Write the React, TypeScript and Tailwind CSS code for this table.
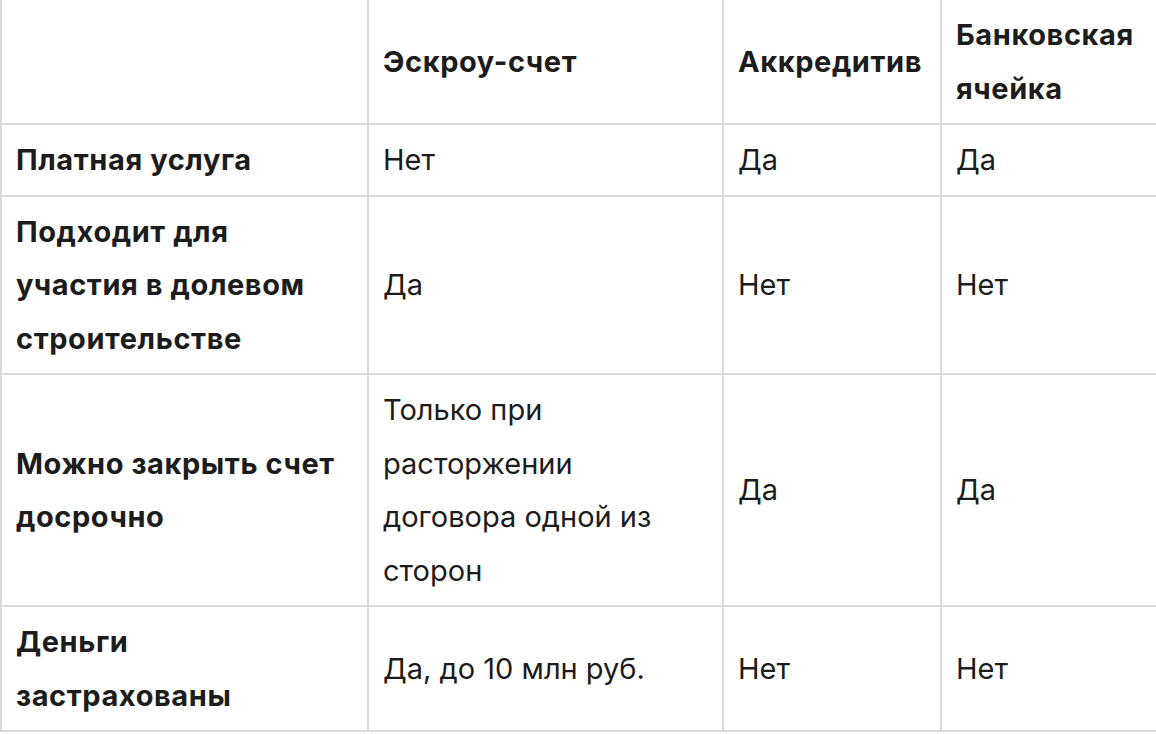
import React from "react";

const rows: { label: string; cells: string[] }[] = [
  { label: "Платная услуга", cells: ["Нет", "Да", "Да"] },
  { label: "Подходит для участия в долевом строительстве", cells: ["Да", "Нет", "Нет"] },
  { label: "Можно закрыть счет досрочно", cells: ["Только при расторжении договора одной из сторон", "Да", "Да"] },
  { label: "Деньги застрахованы", cells: ["Да, до 10 млн руб.", "Нет", "Нет"] },
];

export default function App() {
  return (
    <div className="w-[1156px] h-[734px] bg-white overflow-hidden" style={{ fontFamily: "Inter, 'Noto Sans', sans-serif" }}>
      <table className="table-fixed border-collapse w-[1156px] text-[29px] leading-[53.5px] text-[#1c1c1c]">
        <colgroup>
          <col className="w-[367px]" />
          <col className="w-[355px]" />
          <col className="w-[218px]" />
          <col className="w-[216px]" />
        </colgroup>
        <thead>
          <tr>
            <th className="border-2 border-t-0 border-[#d9d9d9] pl-[14px] pr-6 py-2 text-left align-middle font-bold tracking-[0.02em]"></th>
            <th className="border-2 border-t-0 border-[#d9d9d9] pl-[14px] pr-6 py-2 text-left align-middle font-bold tracking-[0.02em]">Эскроу-счет</th>
            <th className="border-2 border-t-0 border-[#d9d9d9] pl-[14px] pr-2 py-2 text-left align-middle font-bold tracking-[0.02em]">Аккредитив</th>
            <th className="border-2 border-t-0 border-[#d9d9d9] pl-[14px] pr-2 py-2 text-left align-middle font-bold tracking-[0.02em]">Банковская ячейка</th>
          </tr>
        </thead>
        <tbody>
          {rows.map((r) => (
            <tr key={r.label}>
              <td className="border-2 border-[#d9d9d9] pl-[14px] pr-6 py-2 align-middle font-bold tracking-[0.02em]">{r.label}</td>
              {r.cells.map((c, i) => (
                <td key={i} className="border-2 border-[#d9d9d9] pl-[14px] pr-6 py-2 align-middle">{c}</td>
              ))}
            </tr>
          ))}
        </tbody>
      </table>
    </div>
  );
}
